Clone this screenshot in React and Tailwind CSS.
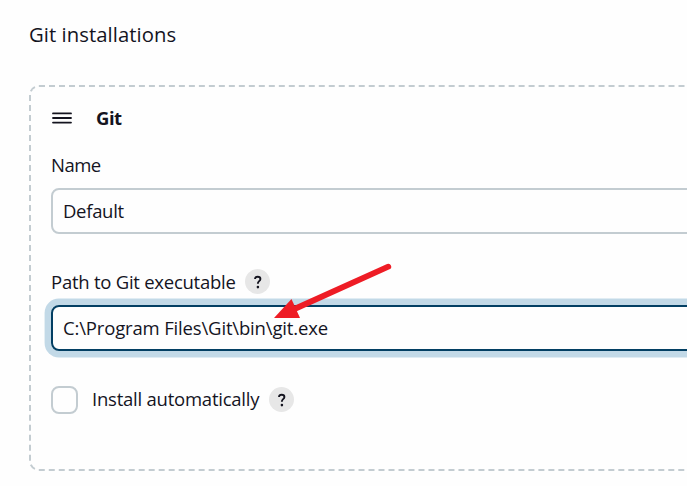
function Help() {
  return (
    <button
      type="button"
      aria-label="Help"
      className="flex h-[25px] w-[25px] shrink-0 items-center justify-center rounded-full bg-[#e7e7e7]"
    >
      <svg width="25" height="25" viewBox="0 0 25 25" fill="none">
        <path
          d="M10 10c.1-1.4 1.1-2.2 2.6-2.2s2.8.8 2.8 2.2c0 2-2.5 2.2-2.5 4.2v.6"
          stroke="#14141f"
          strokeWidth="1.9"
        />
        <circle cx="12.9" cy="18.1" r="1.3" fill="#14141f" />
      </svg>
    </button>
  );
}

function DragHandle() {
  return (
    <svg width="20" height="12" viewBox="0 0 20 12" className="shrink-0">
      <path d="M1 1.4h18M1 6h18M1 10.6h18" stroke="#14141f" strokeWidth="1.8" strokeLinecap="round" />
    </svg>
  );
}

function Arrow() {
  return (
    <svg className="pointer-events-none absolute left-[270px] top-[260px]" width="126" height="64" viewBox="270 260 126 64">
      <path d="M388.3 266.7L290 311" stroke="#ee1c25" strokeWidth="5.8" strokeLinecap="round" />
      <path d="M274 318L291.5 299L300 318Z" fill="#ee1c25" />
    </svg>
  );
}

export default function App() {
  return (
    <main className="relative h-[486px] w-[687px] overflow-hidden bg-[#fefefe] pl-[29px] pt-[19px] font-['Open_Sans','Noto_Sans',sans-serif] text-[18.5px] leading-[30px] text-[#14141f]">
      <h1 className="text-[20.3px] tracking-[0.06px]">Git installations</h1>
      <section className="mt-9 h-[386px] w-[900px] rounded-[10px] border-2 border-dashed border-[#c3ccd1] pl-5 pt-4">
        <div className="flex h-[30px] items-center pl-px">
          <DragHandle />
          <h2 className="ml-6 text-[18.5px] font-bold tracking-[-0.5px]">Git</h2>
        </div>
        <label className="mt-[17px] block w-fit tracking-[-0.5px]">Name</label>
        <div className="mt-2 flex h-[46px] items-center rounded-[8px] border-2 border-[#c3ccd1] pl-[10px] tracking-[-0.3px]">
          Default
        </div>
        <div className="mt-[33px] flex h-[30px] items-center">
          <label className="w-[194px] whitespace-nowrap tracking-[-0.25px]">Path to Git executable</label>
          <span className="-mt-px flex">
            <Help />
          </span>
        </div>
        <div className="mt-2 flex h-[46px] items-center rounded-[8px] border-2 border-[#033f63] pl-[10px] tracking-[-0.16px] shadow-[0_0_0_6.4px_#c2d9e7]">
          C:\Program Files\Git\bin\git.exe
        </div>
        <div className="mt-[34px] flex h-[30px] items-center">
          <span className="h-7 w-[27px] rounded-[8px] border-[2.5px] border-[#c3ccd1]" />
          <div className="-mt-[2px] ml-[14px] flex items-center">
            <label className="w-[177px] whitespace-nowrap tracking-[-0.23px]">Install automatically</label>
            <Help />
          </div>
        </div>
      </section>
      <Arrow />
    </main>
  );
}
